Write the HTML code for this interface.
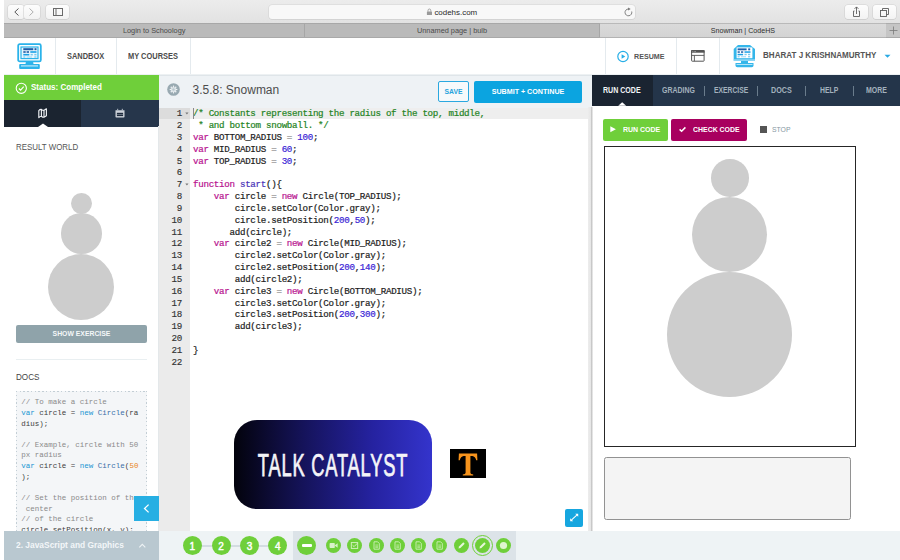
<!DOCTYPE html>
<html><head><meta charset="utf-8">
<style>
*{margin:0;padding:0;box-sizing:border-box}
html,body{width:900px;height:560px;overflow:hidden;background:#fff;font-family:"Liberation Sans",sans-serif}
.a{position:absolute}
.code{font-family:"Liberation Mono",monospace;white-space:pre}
.cm{color:#248424}.kw{color:#b8128f}.nu{color:#3a1fd6}.fn{color:#4a34b8}.op{color:#9a9a9a}.tx{color:#1d1d1d}
.dc{color:#8a8a8a}.dk{color:#2196d3}.dn{color:#e8841c}.dt{color:#3d3d3d}.dcl{color:#3a6fa8}
</style></head><body>
<div class="a" style="left:4px;top:0px;width:896px;height:23px;background:linear-gradient(#ececec,#e2e2e2)"></div>
<div class="a" style="left:8px;top:5px;width:16px;height:14px;background:linear-gradient(#fdfdfd,#f3f3f3);border-radius:3px;box-shadow:0 0 0 0.6px #d0d0d0,0 0.6px 0.6px #bdbdbd"></div>
<div class="a" style="left:24px;top:5px;width:16px;height:14px;background:linear-gradient(#fdfdfd,#f3f3f3);border-radius:3px;box-shadow:0 0 0 0.6px #d0d0d0,0 0.6px 0.6px #bdbdbd"></div>
<div class="a" style="left:46px;top:5px;width:23px;height:14px;background:linear-gradient(#fdfdfd,#f3f3f3);border-radius:3px;box-shadow:0 0 0 0.6px #d0d0d0,0 0.6px 0.6px #bdbdbd"></div>
<div class="a" style="left:845px;top:5px;width:23px;height:14px;background:linear-gradient(#fdfdfd,#f3f3f3);border-radius:3px;box-shadow:0 0 0 0.6px #d0d0d0,0 0.6px 0.6px #bdbdbd"></div>
<div class="a" style="left:873px;top:5px;width:23px;height:14px;background:linear-gradient(#fdfdfd,#f3f3f3);border-radius:3px;box-shadow:0 0 0 0.6px #d0d0d0,0 0.6px 0.6px #bdbdbd"></div>
<div class="a" style="left:269px;top:5px;width:366px;height:14px;background:#f8f8f8;border-radius:3px;box-shadow:0 0 0 0.6px #d4d4d4,0 0.6px 0.6px #c4c4c4"></div>
<svg class="a" style="left:8px;top:5px" width="32" height="14"><path d="M10.5 3.5 L6.8 7 L10.5 10.5" fill="none" stroke="#5a5a5a" stroke-width="1"/><path d="M21.5 3.5 L25.2 7 L21.5 10.5" fill="none" stroke="#b0b0b0" stroke-width="1"/></svg><svg class="a" style="left:46px;top:5px" width="23" height="14"><rect x="7.5" y="3.5" width="9" height="7" fill="none" stroke="#6a6a6a" stroke-width="1"/><line x1="10" y1="3.5" x2="10" y2="10.5" stroke="#6a6a6a" stroke-width="1"/></svg><svg class="a" style="left:845px;top:5px" width="23" height="14"><path d="M9.5 6 H8.5 V11.5 H14.5 V6 H13.5" fill="none" stroke="#5c5c5c" stroke-width="0.9"/><path d="M11.5 9 V2 M9.6 3.8 L11.5 1.9 L13.4 3.8" fill="none" stroke="#5c5c5c" stroke-width="0.9"/></svg><svg class="a" style="left:873px;top:5px" width="23" height="14"><rect x="7.5" y="5.5" width="6" height="6" fill="none" stroke="#5c5c5c" stroke-width="0.9"/><path d="M9.5 5.5 V3.5 H15.5 V9.5 H13.5" fill="none" stroke="#5c5c5c" stroke-width="0.9"/></svg><svg class="a" style="left:620px;top:5px" width="14" height="14"><path d="M8.4 4.0 A3.4 3.4 0 1 0 11.7 6.5" fill="none" stroke="#6e6e6e" stroke-width="0.85"/><path d="M8.1 2.5 L10.6 4.0 L8.1 5.5 Z" fill="#6e6e6e"/></svg><svg class="a" style="left:426px;top:8px" width="7" height="8"><path d="M2 3.6 V2.6 Q2 1 3.4 1 Q4.8 1 4.8 2.6 V3.6" fill="none" stroke="#9a9a9a" stroke-width="0.9"/><rect x="0.9" y="3.4" width="5.1" height="3.6" rx="0.5" fill="#9a9a9a"/></svg><div class="a" style="left:434.40px;top:8.00px;font-size:7.95px;line-height:9px;color:#2a2a2a;font-weight:normal;white-space:nowrap;">codehs.com</div>
<div class="a" style="left:4px;top:23px;width:896px;height:15px;background:#bababa;border-top:1px solid #a8a8a8;border-bottom:1px solid #a9a9a9"></div>
<div class="a" style="left:600px;top:23px;width:286px;height:15px;background:linear-gradient(#dadada,#d3d3d3);border-top:1px solid #b9b9b9;border-bottom:1px solid #b3b3b3"></div>
<div class="a" style="left:886px;top:23px;width:14px;height:15px;background:#c5c5c5;border-top:1px solid #acacac;border-bottom:1px solid #a9a9a9"></div>
<div class="a" style="left:304px;top:24px;width:1px;height:13px;background:#a6a6a6"></div>
<div class="a" style="left:599px;top:24px;width:1px;height:13px;background:#a6a6a6"></div>
<div class="a" style="left:4.20px;width:300px;text-align:center;top:26.00px;font-size:7.35px;line-height:9px;color:#4a4a4a;font-weight:normal;white-space:nowrap;">Login to Schoology</div>
<div class="a" style="left:302.00px;width:300px;text-align:center;top:26.00px;font-size:7.35px;line-height:9px;color:#4a4a4a;font-weight:normal;white-space:nowrap;">Unnamed page | bulb</div>
<div class="a" style="left:592.90px;width:300px;text-align:center;top:27.00px;font-size:7.12px;line-height:8px;color:#2f2f2f;font-weight:normal;white-space:nowrap;">Snowman | CodeHS</div>
<svg class="a" style="left:886px;top:24px" width="14" height="13"><path d="M7.5 2.5 V10.5 M3.5 6.5 H11.5" stroke="#7a7a7a" stroke-width="0.8"/></svg><div class="a" style="left:55px;top:38px;width:1px;height:37px;background:#e4eaee"></div>
<div class="a" style="left:116px;top:38px;width:1px;height:37px;background:#e4eaee"></div>
<div class="a" style="left:190px;top:38px;width:1px;height:37px;background:#e4eaee"></div>
<div class="a" style="left:605px;top:38px;width:1px;height:37px;background:#e4eaee"></div>
<div class="a" style="left:676px;top:38px;width:1px;height:37px;background:#e4eaee"></div>
<div class="a" style="left:719px;top:38px;width:1px;height:37px;background:#e4eaee"></div>
<div class="a" style="left:4px;top:74px;width:896px;height:1px;background:#edf1f3"></div>
<svg class="a" style="left:16.5px;top:43px" width="26.0" height="27.0" viewBox="0 0 26 27"><rect x="1.2" y="1.2" width="22.6" height="17.2" rx="1.5" fill="none" stroke="#2ab3ea" stroke-width="1.8"/><rect x="4" y="4" width="17" height="11.6" fill="#eaf7fd" stroke="#2ab3ea" stroke-width="1.2"/><path d="M9 18.5 H16 L16.5 21 H8.5 Z" fill="#2ab3ea"/><rect x="2.2" y="21" width="20.6" height="5" rx="1" fill="#2ab3ea"/><rect x="4" y="22.3" width="17" height="1.2" fill="#bfe8f9"/><rect x="6.3" y="5.2" width="10" height="2" fill="#1f5aa6"/><rect x="17.5" y="5.2" width="2" height="2" fill="#1f5aa6"/><rect x="6.3" y="8.2" width="2.4" height="1.6" fill="#1f5aa6"/><rect x="9.6" y="8.2" width="2.4" height="1.6" fill="#1f5aa6"/><rect x="13.3" y="8.2" width="6.2" height="1.6" fill="#1aa0e6"/><rect x="6.3" y="10.9" width="6" height="1.6" fill="#1aa0e6"/><rect x="13.6" y="10.9" width="2.2" height="1.5" fill="#79c9f0"/><rect x="17.3" y="10.9" width="2.2" height="1.5" fill="#79c9f0"/><rect x="6.3" y="13.4" width="2" height="1.2" fill="#79c9f0"/><rect x="9.6" y="13.4" width="5.4" height="1.2" fill="#a9dcf5"/><rect x="17.3" y="13.4" width="2.2" height="1.2" fill="#79c9f0"/></svg>
<div class="a" style="left:66.90px;top:52.00px;font-size:8.14px;line-height:9px;color:#4b4b4b;font-weight:bold;white-space:nowrap;transform:scaleX(0.916);transform-origin:0 0;">SANDBOX</div>
<div class="a" style="left:127.80px;top:52.00px;font-size:8.14px;line-height:9px;color:#4b4b4b;font-weight:bold;white-space:nowrap;transform:scaleX(0.916);transform-origin:0 0;">MY COURSES</div>
<svg class="a" style="left:616px;top:50px" width="14" height="14"><circle cx="7" cy="6.5" r="5.2" fill="none" stroke="#27aee6" stroke-width="1.2"/><path d="M5.6 4.2 L9.3 6.5 L5.6 8.8 Z" fill="#27aee6"/></svg><div class="a" style="left:633.80px;top:52.00px;font-size:7.99px;line-height:9px;color:#555;font-weight:bold;white-space:nowrap;transform:scaleX(0.892);transform-origin:0 0;">RESUME</div>
<svg class="a" style="left:690px;top:49px" width="16" height="14"><rect x="1.6" y="1.6" width="12.5" height="10.6" rx="0.6" fill="none" stroke="#555" stroke-width="1"/><rect x="1.1" y="1.1" width="13.5" height="2.6" fill="#555"/><circle cx="2.8" cy="2.4" r="0.45" fill="#ddd"/><circle cx="4.2" cy="2.4" r="0.45" fill="#ddd"/><circle cx="5.6" cy="2.4" r="0.45" fill="#ddd"/><line x1="1.6" y1="6.4" x2="14.1" y2="6.4" stroke="#555" stroke-width="0.9"/><line x1="4.4" y1="6.4" x2="4.4" y2="12.2" stroke="#555" stroke-width="0.9"/></svg><svg class="a" style="left:733px;top:44px" width="23" height="24"><path d="M5 1 H17 L22 5 V16 Q22 17 21 17 H1.5 Q0.7 17 0.7 16 V5 Z" fill="#34b6ea"/><rect x="3.6" y="3.4" width="15.8" height="10.8" fill="#fff"/><rect x="0.7" y="15.2" width="21.3" height="1.8" fill="#8ad5f4"/><rect x="4.6" y="4.4" width="9" height="1.9" fill="#2060ac"/><rect x="15.2" y="4.4" width="2" height="1.9" fill="#2060ac"/><rect x="4.6" y="7.3" width="2.2" height="1.5" fill="#2060ac"/><rect x="8" y="7.3" width="2.2" height="1.5" fill="#2060ac"/><rect x="11.5" y="7.3" width="6" height="1.5" fill="#1aa0e6"/><rect x="4.6" y="9.8" width="5.5" height="1.5" fill="#1aa0e6"/><rect x="11.5" y="9.8" width="2.2" height="1.4" fill="#79c9f0"/><rect x="15" y="9.8" width="2.2" height="1.4" fill="#79c9f0"/><rect x="4.6" y="12.2" width="2" height="1.1" fill="#79c9f0"/><rect x="8" y="12.2" width="5" height="1.1" fill="#a9dcf5"/><rect x="15" y="12.2" width="2.2" height="1.1" fill="#79c9f0"/><rect x="8" y="17" width="7" height="2" fill="#34b6ea"/><path d="M2.5 19 H20.5 V21.5 Q20.5 23.3 18.7 23.3 H4.3 Q2.5 23.3 2.5 21.5 Z" fill="#34b6ea"/><rect x="3.5" y="20" width="16" height="1" fill="#b3e5f8"/></svg>
<div class="a" style="left:762.50px;top:51.00px;font-size:8.28px;line-height:10px;color:#555;font-weight:bold;white-space:nowrap;transform:scaleX(0.974);transform-origin:0 0;">BHARAT J KRISHNAMURTHY</div>
<svg class="a" style="left:884px;top:54px" width="8" height="5"><path d="M0.5 0.8 H6.5 L3.5 3.8 Z" fill="#29a9e3"/></svg><div class="a" style="left:4px;top:75px;width:155px;height:25px;background:#6fcf3a"></div>
<svg class="a" style="left:15px;top:82px" width="13" height="13"><circle cx="6.3" cy="6.3" r="5.1" fill="none" stroke="#fff" stroke-width="1.1"/><path d="M3.9 6.5 L5.6 8.2 L8.7 4.6" fill="none" stroke="#fff" stroke-width="1.1"/></svg><div class="a" style="left:31.00px;top:83.00px;font-size:8.28px;line-height:10px;color:#fff;font-weight:bold;white-space:nowrap;transform:scaleX(0.971);transform-origin:0 0;">Status: Completed</div>
<div class="a" style="left:4px;top:100px;width:77px;height:26.5px;background:#1b2430"></div>
<div class="a" style="left:81px;top:100px;width:78px;height:26.5px;background:#26364b"></div>
<svg class="a" style="left:37px;top:107px" width="11" height="12"><path d="M1.8 3.6 Q3 2.2 4.4 2.4 Q5.8 3.6 7 3.4 Q8.2 2.4 9.4 1.8 V8.8 Q8.2 9.6 7 10.2 Q5.8 10.4 4.4 9.2 Q3 9.2 1.8 10.6 Z M4.4 2.4 V9.2 M7 3.4 V10.2" fill="none" stroke="#eef1f4" stroke-width="1.15" stroke-linejoin="round"/></svg><svg class="a" style="left:114px;top:107px" width="12" height="12"><path d="M1.5 3.2 H10.5 V9.8 Q10.5 10.5 9.8 10.5 H2.2 Q1.5 10.5 1.5 9.8 Z" fill="#cdd3da"/><rect x="2.9" y="5.8" width="6.2" height="3.3" fill="#1f2c3e"/><rect x="2.9" y="7.2" width="6.2" height="0.6" fill="#8e99a6"/><path d="M3.7 1.8 V3.5 M8.3 1.8 V3.5" stroke="#b6bec8" stroke-width="1"/></svg><svg class="a" style="left:37.5px;top:122.5px" width="10" height="4"><path d="M0 4 L5 0.4 L10 4 Z" fill="#fff"/></svg><div class="a" style="left:158px;top:126px;width:1px;height:405px;background:#e4e8ea"></div>
<div class="a" style="left:16.00px;top:142.00px;font-size:8.58px;line-height:10px;color:#555;font-weight:normal;white-space:nowrap;transform:scaleX(0.923);transform-origin:0 0;">RESULT WORLD</div>
<div class="a" style="left:48.30px;top:253.60px;width:66.00px;height:66.00px;border-radius:50%;background:#cdcdcd"></div>
<div class="a" style="left:61.00px;top:213.30px;width:40.60px;height:40.60px;border-radius:50%;background:#cdcdcd"></div>
<div class="a" style="left:70.90px;top:193.00px;width:20.80px;height:20.80px;border-radius:50%;background:#cdcdcd"></div>
<div class="a" style="left:16px;top:325px;width:131px;height:18px;background:#8fa3aa;border-radius:2px"></div>
<div class="a" style="left:-68.50px;width:300px;text-align:center;top:330.00px;font-size:6.85px;line-height:7px;color:#f4f7f8;font-weight:bold;white-space:nowrap;">SHOW EXERCISE</div>
<div class="a" style="left:16px;top:358.5px;width:131px;height:1px;background:#e9eff1"></div>
<div class="a" style="left:16.00px;top:372.00px;font-size:9.01px;line-height:10px;color:#444;font-weight:normal;white-space:nowrap;transform:scaleX(0.903);transform-origin:0 0;">DOCS</div>
<div class="a" style="left:16px;top:391px;width:131px;height:145px;background:#f4f6f8"></div>
<div class="a" style="left:16px;top:391px;width:131px;height:1px;background:repeating-linear-gradient(90deg,#c3ced5 0 1.4px,transparent 1.4px 3.75px)"></div>
<div class="a" style="left:16px;top:391px;width:1px;height:145px;background:repeating-linear-gradient(180deg,#c3ced5 0 1.4px,transparent 1.4px 3.75px)"></div>
<div class="a" style="left:146px;top:391px;width:1px;height:145px;background:repeating-linear-gradient(180deg,#c3ced5 0 1.4px,transparent 1.4px 3.75px)"></div>
<div class="a" style="left:16px;top:391px;width:131px;height:140px;overflow:hidden"><div class="a code" style="left:5.3px;top:6.29px;font-size:7.5px;line-height:10.63px"><span class="dc">// To make a circle</span>
<span class="dk">var</span><span class="dt"> circle = </span><span class="dk">new</span><span class="dcl"> Circle</span><span class="dt">(ra</span>
<span class="dt">dius);</span>

<span class="dc">// Example, circle with 50</span>
<span class="dc">px radius</span>
<span class="dk">var</span><span class="dt"> circle = </span><span class="dk">new</span><span class="dcl"> Circle</span><span class="dt">(</span><span class="dn">50</span>
<span class="dt">);</span>

<span class="dc">// Set the position of the</span>
<span class="dc"> center</span>
<span class="dc">// of the circle</span>
<span class="dt">circle.setPosition(x, y);</span></div></div>
<div class="a" style="left:134px;top:496px;width:25px;height:25px;background:#27afe3"></div>
<svg class="a" style="left:134px;top:496px" width="25" height="25"><path d="M14.6 8.6 L10.5 12.5 L14.6 16.4" fill="none" stroke="#fff" stroke-width="1.3"/></svg><div class="a" style="left:159px;top:75px;width:433px;height:33px;background:#eef2f5;border-top:1px solid #dfe5e9"></div>
<svg class="a" style="left:166px;top:81.9px" width="15" height="15"><circle cx="7.5" cy="7.5" r="6.3" fill="#98a9b1"/><circle cx="7.5" cy="7.5" r="2.6" fill="#dfe6ea"/><circle cx="7.5" cy="7.5" r="1.2" fill="#b9c6cc"/><circle cx="10.70" cy="7.50" r="0.75" fill="#f4f7f8"/><circle cx="9.76" cy="9.76" r="0.75" fill="#f4f7f8"/><circle cx="7.50" cy="10.70" r="0.75" fill="#f4f7f8"/><circle cx="5.24" cy="9.76" r="0.75" fill="#f4f7f8"/><circle cx="4.30" cy="7.50" r="0.75" fill="#f4f7f8"/><circle cx="5.24" cy="5.24" r="0.75" fill="#f4f7f8"/><circle cx="7.50" cy="4.30" r="0.75" fill="#f4f7f8"/><circle cx="9.76" cy="5.24" r="0.75" fill="#f4f7f8"/></svg><div class="a" style="left:192.50px;top:83.00px;font-size:12px;line-height:14px;color:#4d4d4d;font-weight:normal;white-space:nowrap;">3.5.8: Snowman</div>
<div class="a" style="left:438px;top:81px;width:31px;height:21px;border:1px solid #2aa8e0;border-radius:2px;background:#f6f9fb"></div>
<div class="a" style="left:303.50px;width:300px;text-align:center;top:88.00px;font-size:6.8px;line-height:7px;color:#27a3dc;font-weight:bold;white-space:nowrap;">SAVE</div>
<div class="a" style="left:473.5px;top:81px;width:108.5px;height:22px;background:#0ba4e0;border-radius:2px"></div>
<div class="a" style="left:378.00px;width:300px;text-align:center;top:88.00px;font-size:7.14px;line-height:8px;color:#fff;font-weight:bold;white-space:nowrap;">SUBMIT + CONTINUE</div>
<div class="a" style="left:159px;top:108px;width:31px;height:423px;background:#ebebeb"></div>
<div class="a" style="left:190px;top:108px;width:398px;height:423px;background:#fff"></div>
<div class="a" style="left:159px;top:107.8px;width:31px;height:11.7px;background:#dcdcdc"></div>
<div class="a" style="left:190px;top:107.8px;width:398px;height:11.7px;background:#eeeeee"></div>
<div class="a code tx" style="-webkit-text-stroke:0.2px currentColor;left:193px;top:108.34px;font-size:9.2px;line-height:11.83px;letter-spacing:-0.300px"><span class="cm">/* Constants representing the radius of the top, middle,</span>
<span class="cm"> * and bottom snowball. */</span>
<span class="kw">var</span> BOTTOM_RADIUS <span class="op">=</span> <span class="nu">100</span>;
<span class="kw">var</span> MID_RADIUS <span class="op">=</span> <span class="nu">60</span>;
<span class="kw">var</span> TOP_RADIUS <span class="op">=</span> <span class="nu">30</span>;

<span class="kw">function</span> <span class="fn">start</span>(){
    <span class="kw">var</span> circle <span class="op">=</span> <span class="kw">new</span> Circle(TOP_RADIUS);
        circle.setColor(Color.gray);
        circle.setPosition(<span class="nu">200</span>,<span class="nu">50</span>);
       add(circle);
    <span class="kw">var</span> circle2 <span class="op">=</span> <span class="kw">new</span> Circle(MID_RADIUS);
        circle2.setColor(Color.gray);
        circle2.setPosition(<span class="nu">200</span>,<span class="nu">140</span>);
        add(circle2);
    <span class="kw">var</span> circle3 <span class="op">=</span> <span class="kw">new</span> Circle(BOTTOM_RADIUS);
        circle3.setColor(Color.gray);
        circle3.setPosition(<span class="nu">200</span>,<span class="nu">300</span>);
        add(circle3);

}
</div>
<div class="a code" style="-webkit-text-stroke:0.15px #333;left:150px;width:31.9px;text-align:right;top:108.34px;font-size:9.2px;line-height:11.83px;letter-spacing:-0.300px;color:#333">1
2
3
4
5
6
7
8
9
10
11
12
13
14
15
16
17
18
19
20
21
22</div>
<svg class="a" style="left:184.5px;top:112.10px" width="4" height="3"><path d="M0.3 0.5 H3.5 L1.9 2.5 Z" fill="#777"/></svg><svg class="a" style="left:184.5px;top:183.08px" width="4" height="3"><path d="M0.3 0.5 H3.5 L1.9 2.5 Z" fill="#777"/></svg><div class="a" style="left:193.4px;top:108.2px;width:0.7px;height:11px;background:#8a8a8a"></div>
<div class="a" style="left:588px;top:107px;width:5px;height:424px;background:linear-gradient(90deg,#ededed,#e6e6e6 55%,#c4c4c4 72%,#dedede 86%,#f2f2f2)"></div>
<div class="a" style="left:564.5px;top:509px;width:18.5px;height:17.5px;background:#16a6df;border-radius:2px"></div>
<svg class="a" style="left:564.5px;top:509px" width="19" height="18"><path d="M6.6 10.9 L11.8 6.1" stroke="#fff" stroke-width="1.1"/><path d="M10.2 4.7 H13.2 V7.7 Z M5.2 9.3 V12.3 H8.2 Z" fill="#fff"/></svg><div class="a" style="left:592px;top:75px;width:308px;height:31.2px;background:#24354a"></div>
<div class="a" style="left:592px;top:75px;width:61px;height:31.2px;background:#1a2431"></div>
<svg class="a" style="left:617.5px;top:102.4px" width="10" height="4"><path d="M0.2 3.8 L4.2 0.3 L8.2 3.8 Z" fill="#fff"/></svg><div class="a" style="left:602.80px;top:86.00px;font-size:8.14px;line-height:9px;color:#f2f4f6;font-weight:bold;white-space:nowrap;transform:scaleX(0.868);transform-origin:0 0;">RUN CODE</div>
<div class="a" style="left:662.30px;top:86.00px;font-size:8.14px;line-height:9px;color:#a3b1bd;font-weight:bold;white-space:nowrap;transform:scaleX(0.856);transform-origin:0 0;">GRADING</div>
<div class="a" style="left:713.90px;top:86.00px;font-size:8.14px;line-height:9px;color:#a3b1bd;font-weight:bold;white-space:nowrap;transform:scaleX(0.831);transform-origin:0 0;">EXERCISE</div>
<div class="a" style="left:770.80px;top:86.00px;font-size:8.14px;line-height:9px;color:#a3b1bd;font-weight:bold;white-space:nowrap;transform:scaleX(0.884);transform-origin:0 0;">DOCS</div>
<div class="a" style="left:819.50px;top:86.00px;font-size:8.14px;line-height:9px;color:#a3b1bd;font-weight:bold;white-space:nowrap;transform:scaleX(0.843);transform-origin:0 0;">HELP</div>
<div class="a" style="left:865.90px;top:86.00px;font-size:8.14px;line-height:9px;color:#a3b1bd;font-weight:bold;white-space:nowrap;transform:scaleX(0.856);transform-origin:0 0;">MORE</div>
<div class="a" style="left:704.1px;top:85.6px;width:0.8px;height:10.2px;background:#6a7c8c"></div>
<div class="a" style="left:757.4px;top:85.6px;width:0.8px;height:10.2px;background:#6a7c8c"></div>
<div class="a" style="left:804.8000000000001px;top:85.6px;width:0.8px;height:10.2px;background:#6a7c8c"></div>
<div class="a" style="left:852.5px;top:85.6px;width:0.8px;height:10.2px;background:#6a7c8c"></div>
<div class="a" style="left:602.8px;top:119px;width:65.4px;height:21.6px;background:#6fcf3a;border-radius:2px"></div>
<svg class="a" style="left:609px;top:125px" width="10" height="10"><path d="M1.3 1.3 L6.9 4.3 L1.3 7.3 Z" fill="#fff"/></svg><div class="a" style="left:622.70px;top:125.00px;font-size:7.99px;line-height:9px;color:#fff;font-weight:bold;white-space:nowrap;transform:scaleX(0.875);transform-origin:0 0;">RUN CODE</div>
<div class="a" style="left:671.2px;top:119px;width:76.3px;height:21.6px;background:#a8005f;border-radius:2px"></div>
<svg class="a" style="left:678px;top:125px" width="10" height="10"><path d="M1.6 4.4 L3.6 6.2 L7.4 2.4" fill="none" stroke="#fff" stroke-width="1.5"/></svg><div class="a" style="left:692.60px;top:125.00px;font-size:7.99px;line-height:9px;color:#fff;font-weight:bold;white-space:nowrap;transform:scaleX(0.869);transform-origin:0 0;">CHECK CODE</div>
<div class="a" style="left:760px;top:126px;width:6.7px;height:6.6px;background:#555"></div>
<div class="a" style="left:771.60px;top:125.00px;font-size:7.99px;line-height:9px;color:#8697a3;font-weight:normal;white-space:nowrap;transform:scaleX(0.856);transform-origin:0 0;">STOP</div>
<div class="a" style="left:604px;top:146px;width:252px;height:301px;border:1.6px solid #262626;background:#fff"></div>
<div class="a" style="left:667.30px;top:271.80px;width:125.00px;height:125.00px;border-radius:50%;background:#cdcdcd"></div>
<div class="a" style="left:692.30px;top:196.80px;width:75.00px;height:75.00px;border-radius:50%;background:#cdcdcd"></div>
<div class="a" style="left:711.05px;top:159.30px;width:37.50px;height:37.50px;border-radius:50%;background:#cdcdcd"></div>
<div class="a" style="left:604px;top:457px;width:247px;height:62.5px;border:1.6px solid #929292;border-radius:2.5px;background:#f4f4f4"></div>
<div class="a" style="left:4px;top:531px;width:155px;height:29px;background:#b9c8d0"></div>
<div class="a" style="left:16.00px;top:540.00px;font-size:8.58px;line-height:10px;color:#f3f6f8;font-weight:bold;white-space:nowrap;transform:scaleX(0.980);transform-origin:0 0;">2. JavaScript and Graphics</div>
<svg class="a" style="left:138px;top:542px" width="9" height="7"><path d="M1.3 5.3 L4.3 2.3 L7.3 5.3" fill="none" stroke="#eef3f5" stroke-width="1.1"/></svg><div class="a" style="left:159px;top:531px;width:741px;height:29px;background:#eef3f5"></div>
<div class="a" style="left:293px;top:531px;width:223px;height:29px;background:#dce3e8"></div>
<div class="a" style="left:192px;top:544.6px;width:86px;height:2px;background:#d3dce1"></div>
<div class="a" style="left:182.90px;top:536.2px;width:19px;height:19px;border-radius:50%;background:#6fcf3a"></div>
<div class="a" style="left:182.40px;width:20px;text-align:center;top:540.50px;font-size:10px;line-height:11px;color:#fff;font-weight:normal;white-space:nowrap;-webkit-text-stroke:0.45px #fff;">1</div>
<div class="a" style="left:211.50px;top:536.2px;width:19px;height:19px;border-radius:50%;background:#6fcf3a"></div>
<div class="a" style="left:211.00px;width:20px;text-align:center;top:540.50px;font-size:10px;line-height:11px;color:#fff;font-weight:normal;white-space:nowrap;-webkit-text-stroke:0.45px #fff;">2</div>
<div class="a" style="left:240.00px;top:536.2px;width:19px;height:19px;border-radius:50%;background:#6fcf3a"></div>
<div class="a" style="left:239.50px;width:20px;text-align:center;top:540.50px;font-size:10px;line-height:11px;color:#fff;font-weight:normal;white-space:nowrap;-webkit-text-stroke:0.45px #fff;">3</div>
<div class="a" style="left:268.40px;top:536.2px;width:19px;height:19px;border-radius:50%;background:#6fcf3a"></div>
<div class="a" style="left:267.90px;width:20px;text-align:center;top:540.50px;font-size:10px;line-height:11px;color:#fff;font-weight:normal;white-space:nowrap;-webkit-text-stroke:0.45px #fff;">4</div>
<div class="a" style="left:297.40px;top:536.2px;width:19px;height:19px;border-radius:50%;background:#6fcf3a"></div>
<div class="a" style="left:302.1px;top:544.4px;width:9.5px;height:2.3px;background:#fff;border-radius:1px"></div>
<svg class="a" style="left:326.10px;top:538px" width="15" height="15"><circle cx="7.5" cy="7.5" r="7.5" fill="#6fcf3a"/><rect x="3.6" y="5" width="5.2" height="5" rx="0.8" fill="#d9f2c9"/><path d="M8.6 7.5 L11.6 5.2 V9.8 Z" fill="#d9f2c9"/></svg>
<svg class="a" style="left:347.30px;top:538px" width="15" height="15"><circle cx="7.5" cy="7.5" r="7.5" fill="#6fcf3a"/><rect x="4.3" y="4.6" width="6.4" height="5.8" fill="none" stroke="#d9f2c9" stroke-width="0.9"/><path d="M5.6 7.3 L7.1 8.6 L10.3 5.3" fill="none" stroke="#d9f2c9" stroke-width="0.9"/></svg>
<svg class="a" style="left:368.60px;top:538px" width="15" height="15"><circle cx="7.5" cy="7.5" r="7.5" fill="#6fcf3a"/><path d="M5 3.8 H8.6 L10.3 5.5 V11.2 H5 Z" fill="none" stroke="#d9f2c9" stroke-width="0.8"/><path d="M6.3 7 H9 M6.3 8.3 H9 M6.3 9.6 H9" stroke="#d9f2c9" stroke-width="0.6"/></svg>
<svg class="a" style="left:389.90px;top:538px" width="15" height="15"><circle cx="7.5" cy="7.5" r="7.5" fill="#6fcf3a"/><path d="M5 3.8 H8.6 L10.3 5.5 V11.2 H5 Z" fill="none" stroke="#d9f2c9" stroke-width="0.8"/><path d="M6.3 7 H9 M6.3 8.3 H9 M6.3 9.6 H9" stroke="#d9f2c9" stroke-width="0.6"/></svg>
<svg class="a" style="left:410.90px;top:538px" width="15" height="15"><circle cx="7.5" cy="7.5" r="7.5" fill="#6fcf3a"/><path d="M5 3.8 H8.6 L10.3 5.5 V11.2 H5 Z" fill="none" stroke="#d9f2c9" stroke-width="0.8"/><path d="M6.3 7 H9 M6.3 8.3 H9 M6.3 9.6 H9" stroke="#d9f2c9" stroke-width="0.6"/></svg>
<svg class="a" style="left:432.00px;top:538px" width="15" height="15"><circle cx="7.5" cy="7.5" r="7.5" fill="#6fcf3a"/><path d="M5 3.8 H8.6 L10.3 5.5 V11.2 H5 Z" fill="none" stroke="#d9f2c9" stroke-width="0.8"/><path d="M6.3 7 H9 M6.3 8.3 H9 M6.3 9.6 H9" stroke="#d9f2c9" stroke-width="0.6"/></svg>
<svg class="a" style="left:453.50px;top:538px" width="15" height="15"><circle cx="7.5" cy="7.5" r="7.5" fill="#6fcf3a"/><path d="M4.5 10.5 L5 8.6 L9.3 4.3 L10.7 5.7 L6.4 10 Z" fill="#e6f7da"/></svg>
<div class="a" style="left:471.60px;top:535px;width:21px;height:21px;border-radius:50%;border:1.2px solid #6fcf3a"></div>
<svg class="a" style="left:474.60px;top:538px" width="15" height="15"><circle cx="7.5" cy="7.5" r="7.5" fill="#6fcf3a"/><path d="M4.5 10.5 L5 8.6 L9.3 4.3 L10.7 5.7 L6.4 10 Z" fill="#e6f7da"/></svg>
<svg class="a" style="left:496.00px;top:538px" width="15" height="15"><circle cx="7.5" cy="7.5" r="7.5" fill="#6fcf3a"/><circle cx="7.5" cy="7.5" r="3.6" fill="#dff5cf"/></svg>
<div class="a" style="left:234px;top:420px;width:198px;height:89px;border-radius:23px;background:linear-gradient(90deg,#03030c 0%,#15135a 35%,#2522a0 70%,#3434cc 100%)"></div>
<div class="a" style="left:183.20px;width:300px;text-align:center;top:448.00px;font-size:31px;line-height:35px;color:#f4f4f8;font-weight:normal;white-space:nowrap;transform:scaleX(0.59);-webkit-text-stroke:0.75px #f4f4f8;letter-spacing:1.35px;">TALK CATALYST</div>
<div class="a" style="left:450px;top:448.5px;width:36px;height:29.5px;background:#000"></div>
<svg class="a" style="left:450px;top:448.5px" width="36" height="29.5"><path d="M8.9 4.5 H27.1 L27.4 11.2 H26.2 Q25.3 7.3 22.4 6.9 H20.4 V23.9 Q20.6 25.3 23.2 25.5 V26.4 H12.8 V25.5 Q15.4 25.3 15.6 23.9 V6.9 H13.6 Q10.7 7.3 9.8 11.2 H8.6 Z" fill="#f7941d"/></svg>
</body></html>
